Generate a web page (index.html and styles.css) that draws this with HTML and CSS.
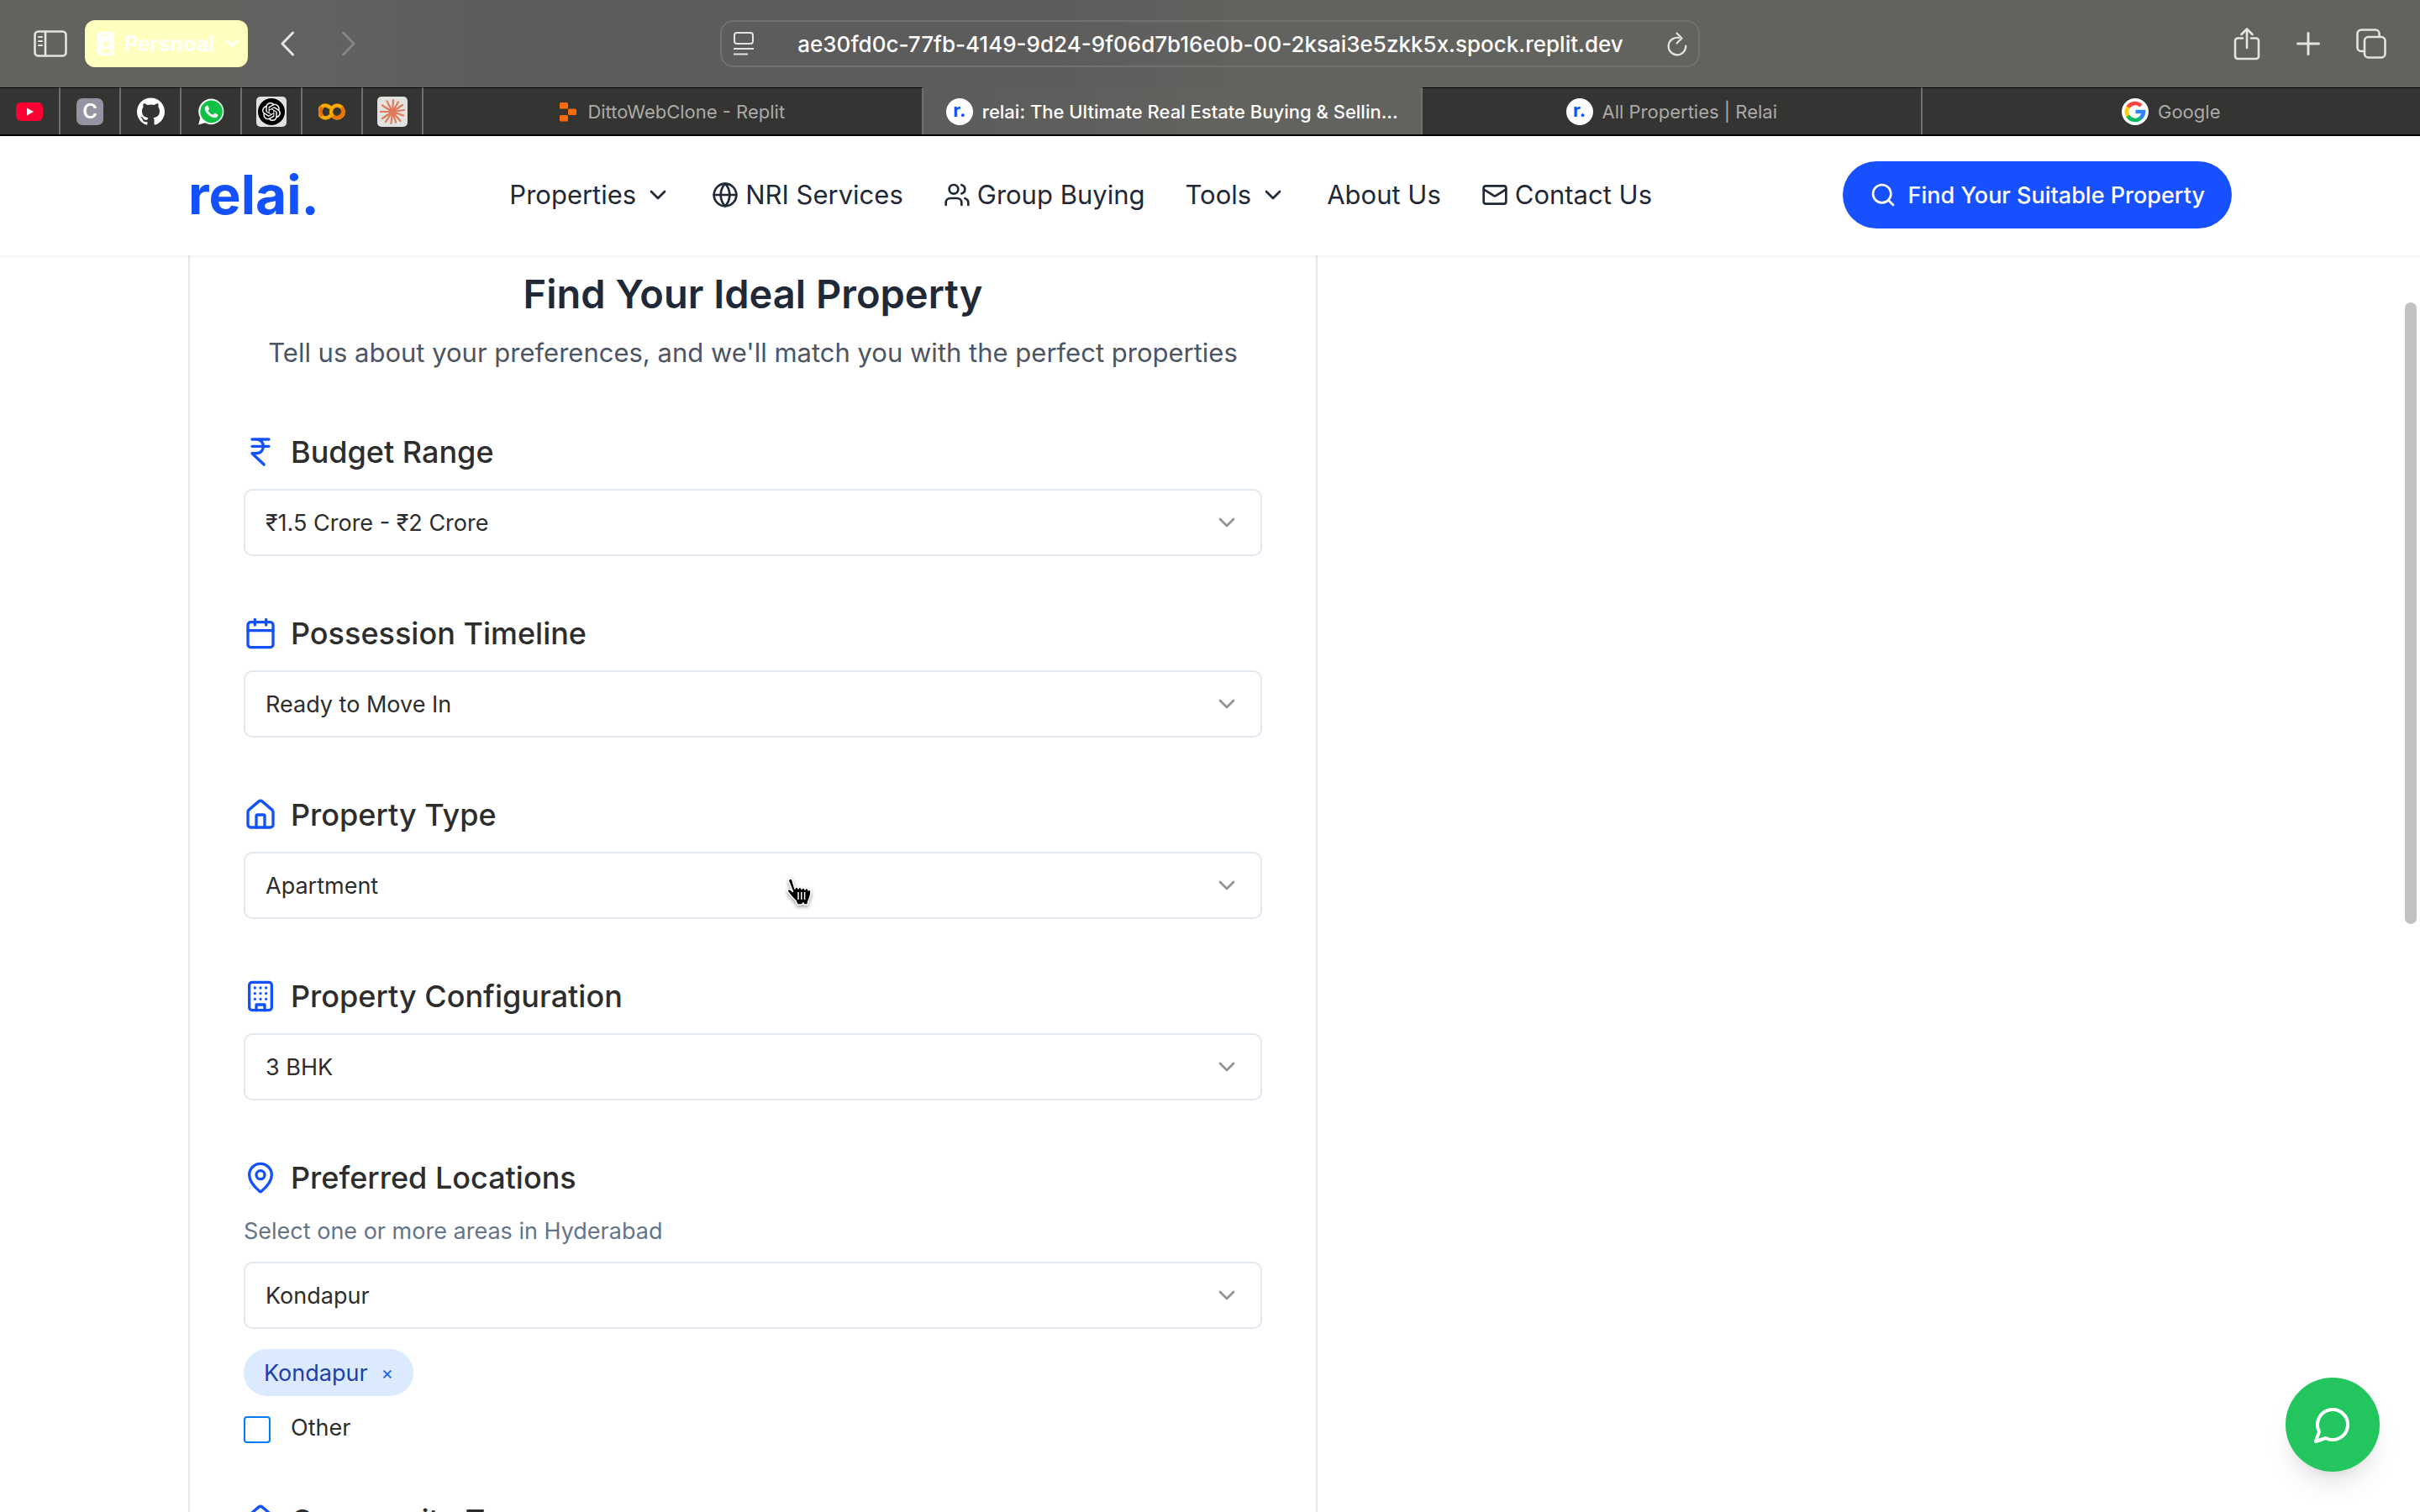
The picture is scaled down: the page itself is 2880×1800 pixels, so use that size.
FILE: index.html
```html
<!DOCTYPE html>
<html lang="en">
<head>
<meta charset="utf-8">
<title>relai: The Ultimate Real Estate Buying &amp; Selling Platform</title>
<link rel="stylesheet" href="styles.css">
</head>
<body>
<div class="window">
  <div class="toolbar">
    <div class="toolbar-side">
      <button class="tool" aria-label="Sidebar"><svg width="40" height="32" viewBox="0 0 40 32" fill="none" stroke="currentColor" stroke-width="2.6" stroke-linecap="round"><rect x="1.5" y="1.5" width="37" height="29" rx="4"/><path d="M14 2v28"/><path d="M6 8h4M6 13h4M6 18h4" stroke-width="2"/></svg></button>
      <button class="profile"><svg width="20" height="28" viewBox="0 0 20 28"><rect width="20" height="28" rx="4" fill="#fff"/><rect x="6" y="3" width="8" height="2" rx="1" fill="#ffffc0"/><circle cx="10" cy="14.500" r="3.500" fill="#ffffc0"/><path d="M4 25c0-7 12-7 12 0z" fill="#ffffc0"/></svg>
        <span>Persnoal</span>
        <svg width="16" height="12" viewBox="0 0 16 12" fill="none" stroke="#fff" stroke-width="3" stroke-linecap="round" stroke-linejoin="round"><path d="M2 2.500l6 6 6-6"/></svg></button>
      <button class="tool back" aria-label="Back"><svg width="18" height="30" viewBox="0 0 18 30" fill="none" stroke="currentColor" stroke-width="3" stroke-linecap="round" stroke-linejoin="round"><path d="M15.500 2L3 15l12.500 13"/></svg></button>
      <button class="tool forward" aria-label="Forward" disabled><svg width="18" height="30" viewBox="0 0 18 30" fill="none" stroke="currentColor" stroke-width="3" stroke-linecap="round" stroke-linejoin="round"><path d="M2.500 2L15 15 2.500 28"/></svg></button>
    </div>
    <div class="address">
      <button class="tool" aria-label="Page menu"><svg width="24" height="28" viewBox="0 0 24 28" fill="none" stroke="currentColor" stroke-width="2"><rect x="1" y="1" width="22" height="13" rx="3"/><path d="M0 20h24M0 26.500h17"/></svg></button>
      <input aria-label="Address" value="ae30fd0c-77fb-4149-9d24-9f06d7b16e0b-00-2ksai3e5zkk5x.spock.replit.dev">
      <button class="tool" aria-label="Reload"><svg width="24" height="30" viewBox="0 0 24 30" fill="none" stroke="currentColor" stroke-width="2.200" stroke-linecap="round" stroke-linejoin="round"><path d="M14 8a10.300 10.300 0 1 0 8.200 9.500"/><path d="M11.500 2.500l6 6-6 6"/></svg></button>
    </div>
    <div class="toolbar-side end">
      <button class="tool" aria-label="Share"><svg width="32" height="40" viewBox="0 0 32 40" fill="none" stroke="currentColor" stroke-width="2.600" stroke-linecap="round" stroke-linejoin="round"><path d="M11 13.500H5a3 3 0 0 0-3 3V35a3 3 0 0 0 3 3h22a3 3 0 0 0 3-3V16.500a3 3 0 0 0-3-3h-6"/><path d="M16 25V2.500M9.500 9L16 2.500 22.500 9"/></svg></button>
      <button class="tool" aria-label="New tab"><svg width="28" height="28" viewBox="0 0 28 28" fill="none" stroke="currentColor" stroke-width="3" stroke-linecap="round"><path d="M14 1.500v25M1.500 14h25"/></svg></button>
      <button class="tool" aria-label="Tab overview"><svg width="36" height="36" viewBox="0 0 36 36" fill="none" stroke="currentColor" stroke-width="2.600" stroke-linejoin="round"><rect x="10" y="10" width="24.500" height="24.500" rx="4.500"/><path d="M10 27H6a4.500 4.500 0 0 1-4.500-4.500V6A4.500 4.500 0 0 1 6 1.500h17A4.500 4.500 0 0 1 27.500 6v4"/></svg></button>
    </div>
  </div>

  <nav class="tabs" aria-label="Browser tabs">
    <a class="pin" href="#" aria-label="YouTube"><svg width="32" height="22" viewBox="0 0 32 22"><rect width="32" height="22" rx="6" fill="#ff0033"/><path d="M13 6.500v9l8-4.500z" fill="#fff"/></svg></a>
    <a class="pin" href="#" aria-label="C"><span class="letter">C</span></a>
    <a class="pin" href="#" aria-label="GitHub"><svg width="33" height="33" viewBox="0 0 24 24"><path fill="#fff" d="M12 .297c-6.630 0-12 5.373-12 12 0 5.303 3.438 9.800 8.205 11.385.600.113.820-.258.820-.577 0-.285-.010-1.040-.015-2.040-3.338.724-4.042-1.610-4.042-1.610C4.422 18.070 3.633 17.700 3.633 17.700c-1.087-.744.084-.729.084-.729 1.205.084 1.838 1.236 1.838 1.236 1.070 1.835 2.809 1.305 3.495.998.108-.776.417-1.305.760-1.605-2.665-.300-5.466-1.332-5.466-5.930 0-1.310.465-2.380 1.235-3.220-.135-.303-.540-1.523.105-3.176 0 0 1.005-.322 3.300 1.230.960-.267 1.980-.399 3-.405 1.020.006 2.040.138 3 .405 2.280-1.552 3.285-1.230 3.285-1.230.645 1.653.240 2.873.120 3.176.765.840 1.230 1.910 1.230 3.220 0 4.610-2.805 5.625-5.475 5.920.420.360.810 1.096.810 2.220 0 1.606-.015 2.896-.015 3.286 0 .315.210.690.825.570C20.565 22.092 24 17.592 24 12.297c0-6.627-5.373-12-12-12"/></svg></a>
    <a class="pin" href="#" aria-label="WhatsApp"><svg width="31" height="32" viewBox="0 0 24 24"><path fill="#fff" d="M.057 24l1.687-6.163A11.867 11.867 0 0 1 .157 11.892C.160 5.335 5.495 0 12.050 0a11.900 11.900 0 0 1 0 23.785 11.900 11.900 0 0 1-5.688-1.448z"/><circle cx="12.050" cy="11.900" r="10.300" fill="#0ec244"/><path fill="#fff" d="M17.472 14.382c-.297-.149-1.758-.867-2.030-.967-.273-.099-.471-.148-.670.150-.197.297-.767.966-.940 1.164-.173.199-.347.223-.644.075-.297-.150-1.255-.463-2.390-1.475-.883-.788-1.480-1.761-1.653-2.059-.173-.297-.018-.458.130-.606.134-.133.298-.347.446-.520.149-.174.198-.298.298-.497.099-.198.050-.371-.025-.520-.075-.149-.669-1.612-.916-2.207-.242-.579-.487-.500-.669-.510-.173-.008-.371-.010-.570-.010-.198 0-.520.074-.792.372-.272.297-1.040 1.016-1.040 2.479 0 1.462 1.065 2.875 1.213 3.074.149.198 2.096 3.200 5.077 4.487.709.306 1.262.489 1.694.625.712.227 1.360.195 1.871.118.571-.085 1.758-.719 2.006-1.413.248-.694.248-1.289.173-1.413-.074-.124-.272-.198-.570-.347"/></svg></a>
    <a class="pin" href="#" aria-label="ChatGPT"><span class="plate"><svg width="32" height="32" viewBox="0 0 32 32"><circle cx="16" cy="16" r="16" fill="#000"/><path transform="translate(5 5) scale(.917)" fill="#fff" d="M22.2819 9.8211a5.9847 5.9847 0 0 0-.5157-4.9108 6.0462 6.0462 0 0 0-6.5098-2.9A6.0651 6.0651 0 0 0 4.9807 4.1818a5.9847 5.9847 0 0 0-3.9977 2.9 6.0462 6.0462 0 0 0 .7427 7.0966 5.98 5.98 0 0 0 .511 4.9107 6.051 6.051 0 0 0 6.5146 2.9001A5.9847 5.9847 0 0 0 13.2599 24a6.0557 6.0557 0 0 0 5.7718-4.2058 5.9894 5.9894 0 0 0 3.9977-2.9001 6.0557 6.0557 0 0 0-.7475-7.0729zm-9.022 12.6081a4.4755 4.4755 0 0 1-2.8764-1.0408l.1419-.0804 4.7783-2.7582a.7948.7948 0 0 0 .3927-.6813v-6.7369l2.02 1.1686a.071.071 0 0 1 .038.052v5.5826a4.504 4.504 0 0 1-4.4945 4.4944zm-9.6607-4.1254a4.4708 4.4708 0 0 1-.5346-3.0137l.142.0852 4.783 2.7582a.7712.7712 0 0 0 .7806 0l5.8428-3.3685v2.3324a.0804.0804 0 0 1-.0332.0615L9.74 19.9502a4.4992 4.4992 0 0 1-6.1408-1.6464zM2.3408 7.8956a4.485 4.485 0 0 1 2.3655-1.9728V11.6a.7664.7664 0 0 0 .3879.6765l5.8144 3.3543-2.0201 1.1685a.0757.0757 0 0 1-.071 0l-4.8303-2.7865A4.504 4.504 0 0 1 2.3408 7.872zm16.5963 3.8558L13.1038 8.364 15.1192 7.2a.0757.0757 0 0 1 .071 0l4.8303 2.7913a4.4944 4.4944 0 0 1-.6765 8.1042v-5.6772a.79.79 0 0 0-.407-.667zm2.0107-3.0231l-.142-.0852-4.7735-2.7818a.7759.7759 0 0 0-.7854 0L9.409 9.2297V6.8974a.0662.0662 0 0 1 .0284-.0615l4.8303-2.7866a4.4992 4.4992 0 0 1 6.6802 4.66zM8.3065 12.863l-2.02-1.1638a.0804.0804 0 0 1-.038-.0567V6.0742a4.4992 4.4992 0 0 1 7.3757-3.4537l-.142.0805L8.704 5.459a.7948.7948 0 0 0-.3927.6813zm1.0976-2.3654l2.602-1.4998 2.6069 1.4998v2.9994l-2.5974 1.4997-2.6067-1.4997Z"/></svg></span></a>
    <a class="pin" href="#" aria-label="Colab"><svg width="32" height="20" viewBox="0 0 32 20" fill="none" stroke-width="4.500"><path d="M14.500 5.700A7.400 7.400 0 1 0 14.500 14.300" stroke="#f9ab00"/><path d="M4.500 15.200A7.400 7.400 0 0 1 4.500 4.800" stroke="#e8710a"/><circle cx="22.300" cy="10" r="7.400" stroke="#f9ab00"/><path d="M27.500 4.800A7.400 7.400 0 0 1 17.100 15.200" stroke="#e8710a"/></svg></a>
    <a class="pin" href="#" aria-label="Claude"><span class="plate"><svg width="32" height="32" viewBox="0 0 32 32" stroke="#de7a58" stroke-width="2.200" stroke-linecap="round"><path d="M16 16L17 2M16 16l7-11.500M16 16L28 8M16 16l14-2M16 16l13 4.500M16 16l9.500 11M16 16l4 12.500M16 16l-1.500 14M16 16L8 28M16 16L4 24M16 16L2 16M16 16L4 8.500M16 16L9.500 3.500"/><circle cx="16" cy="16" r="2.500" fill="#de7a58"/></svg></span></a>
    <a class="tab" href="#"><svg width="22" height="24" viewBox="0 0 22 24" fill="#ff6a0d"><rect x="0" y="1" width="10" height="7.500" rx="1.500"/><rect x="10" y="8.500" width="10" height="7.500" rx="1.500"/><rect x="0" y="16" width="10" height="7.500" rx="1.500"/></svg><span>DittoWebClone - Replit</span></a>
    <a class="tab active" href="#" aria-current="page"><span class="dot">r.</span><span>relai: The Ultimate Real Estate Buying &amp; Sellin...</span></a>
    <a class="tab" href="#"><span class="dot">r.</span><span>All Properties | Relai</span></a>
    <a class="tab" href="#"><svg width="32" height="32" viewBox="0 0 32 32"><circle cx="16" cy="16" r="16" fill="#fff"/><g fill="none" stroke-width="4.600"><path d="M23 9A10 10 0 0 0 7.300 11" stroke="#ff4641"/><path d="M7.600 10.600a10 10 0 0 0 0 10.800" stroke="#ffcf00"/><path d="M7.300 21A10 10 0 0 0 22.500 23.500" stroke="#0ebc5f"/><path d="M16.500 16H26a10 10 0 0 1-3.800 7.800" stroke="#3186ff"/></g></svg><span>Google</span></a>
  </nav>

  <header class="site-header">
    <a class="logo" href="#">relai.</a>
    <nav class="menu" aria-label="Main">
      <a class="wide" href="#">Properties <svg class="i32" viewBox="0 0 24 24"><path d="m6 9 6 6 6-6"/></svg></a>
      <a href="#"><svg class="i32" viewBox="0 0 24 24"><circle cx="12" cy="12" r="10"/><path d="M12 2a14.500 14.500 0 0 0 0 20 14.500 14.500 0 0 0 0-20M2 12h20"/></svg>NRI Services</a>
      <a href="#"><svg class="i32" viewBox="0 0 24 24"><path d="M16 21v-2a4 4 0 0 0-4-4H6a4 4 0 0 0-4 4v2"/><circle cx="9" cy="7" r="4"/><path d="M22 21v-2a4 4 0 0 0-3-3.870M16 3.130a4 4 0 0 1 0 7.750"/></svg>Group Buying</a>
      <a class="wide" href="#">Tools <svg class="i32" viewBox="0 0 24 24"><path d="m6 9 6 6 6-6"/></svg></a>
      <a href="#">About Us</a>
      <a href="#"><svg class="i32" viewBox="0 0 24 24"><rect x="2" y="4" width="20" height="16" rx="2"/><path d="m22 7-8.970 5.700a1.940 1.940 0 0 1-2.060 0L2 7"/></svg>Contact Us</a>
    </nav>
    <button class="cta"><svg class="i32" viewBox="0 0 24 24"><circle cx="11" cy="11" r="8"/><path d="m21 21-4.300-4.300"/></svg>Find Your Suitable Property</button>
  </header>

  <main class="page">
    <form class="card">
      <div class="intro">
        <h1>Find Your Ideal Property</h1>
        <p>Tell us about your preferences, and we'll match you with the perfect properties</p>
      </div>

      <div class="field">
        <label for="budget"><svg class="i40" viewBox="0 0 24 24"><path d="M6 3h12M6 8h12M6 13l8.500 8M6 13h3M9 13c6.667 0 6.667-10 0-10"/></svg>Budget Range</label>
        <div class="select"><select id="budget"><option>₹1.5 Crore - ₹2 Crore</option></select><svg viewBox="0 0 24 24"><path d="m6 9 6 6 6-6"/></svg></div>
      </div>
      <div class="field">
        <label for="timeline"><svg class="i40" viewBox="0 0 24 24"><path d="M8 2v4M16 2v4"/><rect x="3" y="4" width="18" height="18" rx="2"/><path d="M3 10h18"/></svg>Possession Timeline</label>
        <div class="select"><select id="timeline"><option>Ready to Move In</option></select><svg viewBox="0 0 24 24"><path d="m6 9 6 6 6-6"/></svg></div>
      </div>
      <div class="field">
        <label for="type"><svg class="i40" viewBox="0 0 24 24"><path d="M15 21v-8a1 1 0 0 0-1-1h-4a1 1 0 0 0-1 1v8"/><path d="M3 10a2 2 0 0 1 .709-1.528l7-5.999a2 2 0 0 1 2.582 0l7 5.999A2 2 0 0 1 21 10v9a2 2 0 0 1-2 2H5a2 2 0 0 1-2-2z"/></svg>Property Type</label>
        <div class="select"><select id="type"><option>Apartment</option></select><svg viewBox="0 0 24 24"><path d="m6 9 6 6 6-6"/></svg></div>
      </div>
      <div class="field">
        <label for="config"><svg class="i40" viewBox="0 0 24 24"><rect x="4" y="2" width="16" height="20" rx="2"/><path d="M9 22v-4h6v4M8 6h.010M16 6h.010M12 6h.010M12 10h.010M12 14h.010M16 10h.010M16 14h.010M8 10h.010M8 14h.010"/></svg>Property Configuration</label>
        <div class="select"><select id="config"><option>3 BHK</option></select><svg viewBox="0 0 24 24"><path d="m6 9 6 6 6-6"/></svg></div>
      </div>
      <div class="field">
        <label for="location"><svg class="i40" viewBox="0 0 24 24"><path d="M20 10c0 4.993-5.539 10.193-7.399 11.799a1 1 0 0 1-1.202 0C9.539 20.193 4 14.993 4 10a8 8 0 0 1 16 0"/><circle cx="12" cy="10" r="3"/></svg>Preferred Locations</label>
        <p class="hint">Select one or more areas in Hyderabad</p>
        <div class="select"><select id="location"><option>Kondapur</option></select><svg viewBox="0 0 24 24"><path d="m6 9 6 6 6-6"/></svg></div>
        <div class="chips"><span class="chip">Kondapur <button type="button" aria-label="Remove Kondapur">×</button></span></div>
        <div class="check"><input type="checkbox" id="other"><label for="other">Other</label></div>
      </div>
      <div class="field">
        <label for="community"><svg class="i40" viewBox="0 0 24 24"><path d="M15 21v-8a1 1 0 0 0-1-1h-4a1 1 0 0 0-1 1v8"/><path d="M3 10a2 2 0 0 1 .709-1.528l7-5.999a2 2 0 0 1 2.582 0l7 5.999A2 2 0 0 1 21 10v9a2 2 0 0 1-2 2H5a2 2 0 0 1-2-2z"/></svg>Community Type</label>
        <div class="select"><select id="community"><option>Gated Community</option></select></div>
      </div>
    </form>
    <span class="scrollbar"></span>
  </main>

  <button class="fab" aria-label="Chat"><svg width="48" height="48" viewBox="0 0 24 24"><path d="M7.900 20A9 9 0 1 0 4 16.100L2 22Z"/></svg></button>
  <svg class="cursor" width="36" height="42" viewBox="0 0 36 42"><path d="M5.500 3.500c2-1 3 0 3.500 1.500L12 15c0-2.500 3.500-3 4 0 .5-2.500 3.500-2.500 4 .5.500-2 3.500-2 4 .5 0-2 4-2 4 1 .5-1.500 3-1 3 1.500 0 6-2 8-3 11L27 34h-4l-1-2-2 2h-5l-2-4.500C10 26.500 7 24 3.500 18.500c-1-2 1-3.500 3-2.500l3 2.500L4.500 6c-.3-1 0-2 1-2.500z" fill="#000" stroke="#fff" stroke-width="1.500" stroke-linejoin="round"/><path d="M16 19v9M19.800 19v9M23.600 19v9" stroke="#fff" stroke-width="1.500"/></svg>
</div>
</body>
</html>
```
FILE: styles.css
```css
* { box-sizing: border-box; }
body { margin: 0; font-family: Inter, "Noto Sans", sans-serif; background: #fff; color: #2d2d2d; }
button, input, select { font: inherit; color: inherit; margin: 0; }
button { padding: 0; border: 0; background: none; }
a { color: inherit; text-decoration: none; }
svg { flex: none; display: block; }

.window { position: relative; height: 100vh; display: flex; flex-direction: column; overflow: hidden; }

/* Browser toolbar */
.toolbar {
  flex: none; height: 104px; padding: 0 40px;
  display: flex; align-items: center;
  background: linear-gradient(90deg, #62625f 0, #61625f 14%, #5b5c5b 21%, #5b5c5b 42%, #62625f 52%);
  color: #e4e4e2;
}
.toolbar-side { flex: 1 1 0; display: flex; align-items: center; gap: 43px; }
.toolbar-side.end { justify-content: flex-end; }
.tool { display: flex; color: inherit; }
.profile {
  height: 56px; margin-left: -22px; padding: 0 11px 0 15px; border-radius: 12px;
  display: flex; align-items: center; gap: 12px;
  background: #ffffc0; color: #fff; font-size: 25px; font-weight: 700;
}
.back { margin-left: -5px; }
.forward { margin-left: 12px; color: #868685; }
.address {
  flex: none; width: 1166px; height: 56px; padding: 0 13px 0 14px; border: 2px solid #71716f; border-radius: 16px;
  display: flex; align-items: center;
}
.address input {
  flex: 1; min-width: 0; border: 0; outline: 0; background: none;
  font-size: 26px; font-weight: 500; color: #fff; text-align: center;
}

/* Tab strip */
.tabs { flex: none; height: 58px; display: flex; border-bottom: 2px solid #000; background: #343432; }
.pin, .tab { display: flex; align-items: center; justify-content: center; border-top: 1px solid #000; border-right: 2px solid #71716f; }
.pin { flex: none; width: 72px; }
.tab { flex: 1 1 0; min-width: 0; gap: 11px; font-size: 22px; color: #abaaa8; }
.tab:last-child { border-right: 0; }
.tab.active { background: linear-gradient(90deg, #5b5c5b, #62625f 60%); border-top-color: transparent; color: #fff; font-weight: 500; }
.letter { width: 32px; height: 32px; border-radius: 7px; background: #9494a2; color: #fff; font-size: 24px; font-weight: 600; line-height: 32px; text-align: center; }
.plate { width: 36px; height: 36px; border-radius: 5px; background: #e2e2e0; display: flex; align-items: center; justify-content: center; }
.dot { flex: none; width: 32px; height: 32px; border-radius: 50%; background: #fff; color: #1351ff; font-size: 22px; font-weight: 700; line-height: 29px; text-align: center; }

/* Site header */
.site-header {
  position: relative; z-index: 1; flex: none; height: 142px; padding: 0 224px 2px;
  display: flex; align-items: center; justify-content: space-between;
  background: #fff; box-shadow: 0 2px 4px rgba(0, 0, 0, .06);
}
.logo { font-size: 64px; font-weight: 700; line-height: 72px; color: #1351ff; }
.menu { display: flex; gap: 48px; font-size: 31px; color: #1f2937; }
.menu a { display: flex; align-items: center; gap: 8px; line-height: 48px; }
.menu .wide { gap: 10px; }
.i32, .i40 { width: 32px; height: 32px; fill: none; stroke: currentColor; stroke-width: 2; stroke-linecap: round; stroke-linejoin: round; }
.i40 { width: 40px; height: 40px; stroke: #1351ff; }
.cta {
  height: 80px; padding: 0 32px; border-radius: 40px; display: flex; align-items: center; gap: 14px;
  background: #1751ff; color: #fff; font-size: 27px; font-weight: 500;
}

/* Form */
.page { position: relative; flex: 1; min-height: 0; overflow: hidden; padding: 0 224px; }
.card {
  width: 1344px; max-width: 100%; padding: 14px 64px 64px;
  border: 2px solid #e5e7eb; border-top: 0;
  display: flex; flex-direction: column; gap: 72px;
}
.intro { text-align: center; }
.intro h1 { margin: 0 0 12px; font-size: 47px; line-height: 64px; font-weight: 600; color: #1f2937; }
.intro p { margin: 0; font-size: 31px; line-height: 52px; color: #4b5563; }
.field > label { display: flex; align-items: center; gap: 16px; height: 40px; margin-bottom: 24px; font-size: 36px; font-weight: 500; }
.select { position: relative; }
.select select {
  display: block; appearance: none; width: 100%; height: 80px; padding: 0 26px 0 24px;
  border: 2px solid #e2e8f0; border-radius: 10px; background: #fff; font-size: 27px;
}
.select svg {
  position: absolute; right: 26px; top: 24px; width: 32px; height: 32px; pointer-events: none;
  fill: none; stroke: #919191; stroke-width: 2; stroke-linecap: round; stroke-linejoin: round;
}
.hint { margin: 0 0 16px; font-size: 27px; line-height: 40px; color: #64748b; }
.chips { display: flex; margin: 24px 0; }
.chip {
  height: 56px; padding: 0 24px; border-radius: 28px; display: flex; align-items: center; gap: 16px;
  background: #dbeafe; color: #1e40af; font-size: 27px;
}
.chip button { color: #2563eb; font-size: 22px; }
.check { display: flex; gap: 24px; height: 32px; font-size: 27px; }
.check input { appearance: none; width: 32px; height: 32px; border: 2px solid #007bff; border-radius: 4px; background: #fff; }
.check label { line-height: 28px; }

/* Floating layers */
.scrollbar { position: absolute; top: 56px; right: 4px; width: 14px; height: 740px; border-radius: 7px; background: #c1c1c1; }
.fab {
  position: absolute; right: 48px; bottom: 48px; width: 112px; height: 112px; border-radius: 50%;
  display: flex; align-items: center; justify-content: center;
  background: #22c55e; box-shadow: 0 20px 30px -6px rgba(0, 0, 0, .1), 0 8px 12px -8px rgba(0, 0, 0, .1);
}
.fab svg { fill: none; stroke: #fff; stroke-width: 2; stroke-linecap: round; stroke-linejoin: round; }
.cursor { position: absolute; left: 934px; top: 1043px; filter: drop-shadow(0 2px 2px rgba(0, 0, 0, .4)); }
```
